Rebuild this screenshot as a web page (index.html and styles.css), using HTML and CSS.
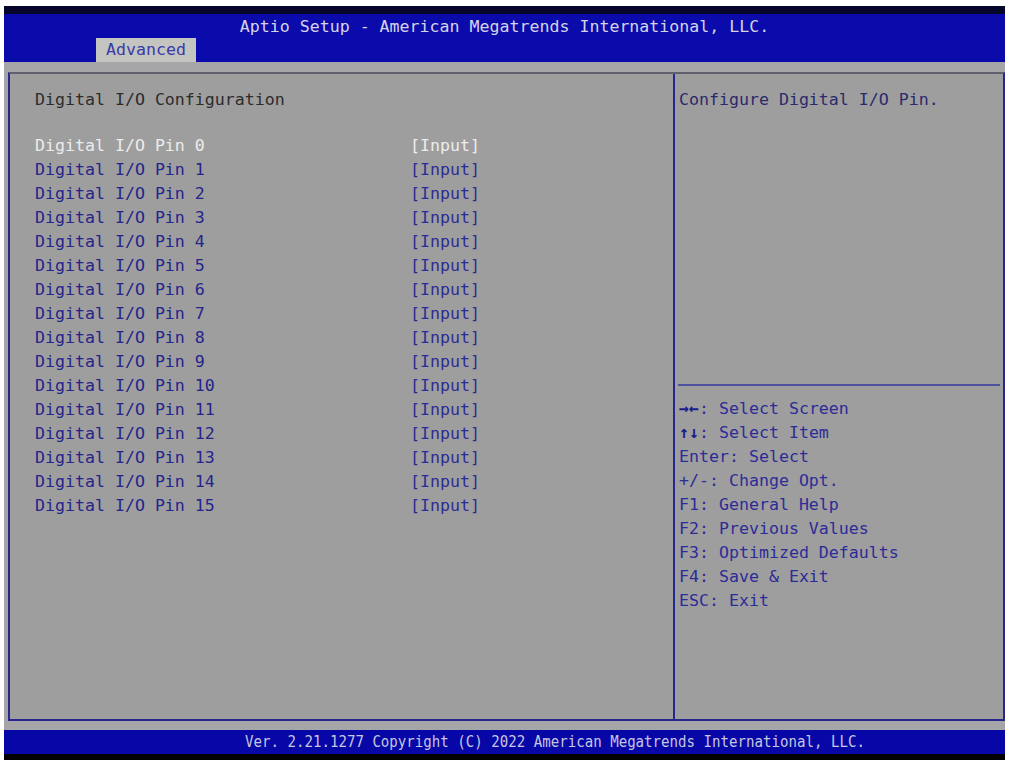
FILE: index.html
```html
<!DOCTYPE html>
<html lang="en">
<head>
  <meta charset="UTF-8">
  <title>Aptio Setup - Advanced</title>
  <link rel="stylesheet" href="styles.css">
</head>
<body>

  <div class="screen">
    <div class="edge"></div>

    <div class="header">
      <div class="title">Aptio Setup - American Megatrends International, LLC.</div>
      <div class="tabs">
        <span class="tab active">Advanced</span>
      </div>
    </div>

    <div class="main">
      <div class="frame">
        <!-- cot trai: danh sach tuy chon -->
        <div class="left">
          <div class="page-title">Digital I/O Configuration</div>
          <div class="rows" id="rows"></div>
        </div>

        <!-- cot phai: tro giup -->
        <div class="right">
          <div class="desc">Configure Digital I/O Pin.</div>
          <div class="sep"></div>
          <ul class="keys">
            <li><b>→←</b>: Select Screen</li>
            <li><b>↑↓</b>: Select Item</li>
            <li>Enter: Select</li>
            <li>+/-: Change Opt.</li>
            <li>F1: General Help</li>
            <li>F2: Previous Values</li>
            <li>F3: Optimized Defaults</li>
            <li>F4: Save &amp; Exit</li>
            <li>ESC: Exit</li>
          </ul>
        </div>
      </div>
    </div>

    <div class="footer">
      <span class="footer-text">Ver. 2.21.1277 Copyright (C) 2022 American Megatrends International, LLC.</span>
    </div>
    <div class="edge bottom"></div>
  </div>

  <script>
    // tao 16 dong Digital I/O Pin
    const rows = document.getElementById("rows");
    for (let i = 0; i < 16; i++) {
      const row = document.createElement("div");
      row.className = i === 0 ? "row selected" : "row";
      row.innerHTML = `<span class="label">Digital I/O Pin ${i}</span><span class="value">[Input]</span>`;
      rows.appendChild(row);
    }
  </script>

</body>
</html>
```

FILE: styles.css
```css
body {
  margin: 0;
  background: #ffffff;
  font-family: "DejaVu Sans Mono", "Liberation Mono", monospace;
  font-size: 16.6px;
}
.screen {
  margin: 6px 4px 0 4px;
}
.edge {
  height: 8px;
  background: #06062a;
}
.edge.bottom {
  height: 6px;
  background: #000000;
}
/* thanh tieu de mau xanh */
.header {
  background: #0b0bab;
  height: 48px;
  padding-top: 2px;
  box-sizing: border-box;
}
.title {
  color: #d4d4e6;
  text-align: center;
  line-height: 22px;
}
.tabs {
  padding-left: 92px;
  height: 24px;
}
.tab {
  display: inline-block;
  width: 100px;
  height: 24px;
  line-height: 24px;
  text-align: center;
  box-sizing: border-box;
}
.tab.active {
  background: #c4c4c0;
  color: #3a3aa8;
}
/* vung noi dung xam */
.main {
  background: #a6a6a8;
  padding: 10px 0 9px 4px;
}
.frame {
  display: flex;
  height: 649px;
  box-sizing: border-box;
  border: 2px solid #26268e;
  border-top-color: #60606e;
  background: #9e9e9e;
}
.left {
  width: 663px;
  border-right: 2px solid #26268e;
  padding: 14px 0 0 25px;
  box-sizing: content-box;
  width: 638px;
}
.page-title {
  color: #2c2c2c;
  line-height: 24px;
  margin-bottom: 22px;
}
.row {
  display: flex;
  line-height: 24px;
  color: #24248c;
}
.row .label {
  width: 375px;
}
.row .value {
  color: #2c2c96;
}
.row.selected,
.row.selected .value {
  color: #ececec;
}
.right {
  flex: 1;
  display: flex;
  flex-direction: column;
}
.desc {
  height: 310px;
  box-sizing: border-box;
  padding: 14px 0 0 4px;
  line-height: 24px;
  color: #2a2a6c;
}
.sep {
  height: 2px;
  margin: 0 3px 0 3px;
  background: #5050a0;
}
.keys {
  list-style: none;
  margin: 11px 0 0 0;
  padding: 0 0 0 4px;
  color: #2c2c98;
}
.keys li {
  line-height: 24px;
}
.keys b {
  font-weight: bold;
  color: #1c1c8c;
}
/* dong ban quyen phia duoi */
.footer {
  background: #0707a8;
  height: 24px;
  line-height: 24px;
  padding-left: 241px;
  white-space: nowrap;
  overflow: hidden;
}
.footer-text {
  display: inline-block;
  color: #c6c6e0;
  transform: scaleX(0.85);
  transform-origin: left center;
}
```
